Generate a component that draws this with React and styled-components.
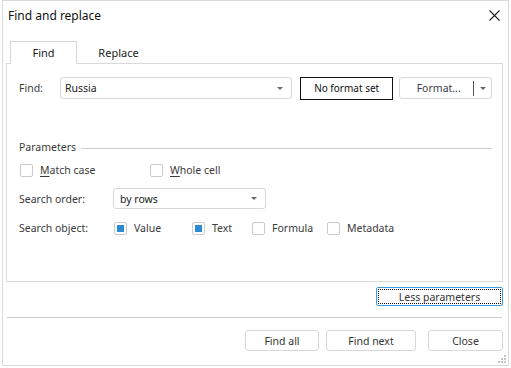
import React from "react";
import styled, { createGlobalStyle } from "styled-components";

const Global = createGlobalStyle`
  html, body { margin: 0; padding: 0; background: #fff; }
  body { font-family: "Noto Sans", "Open Sans", sans-serif; font-size: 10.5px; color: #333; }
`;

const Window = styled.div`
  box-sizing: border-box;
  margin-left: 2px;
  width: 507px;
  height: 366px;
  border: 1px solid #dadada;
  background: #fff;
  display: flex;
  flex-direction: column;
  position: relative;
`;

const TitleBar = styled.div`
  height: 29px;
  display: flex;
  align-items: center;
  justify-content: space-between;
  padding: 0 8px 0 5px;
  font-size: 12px;
  color: #111;
`;

const CloseX = styled.svg`
  width: 11px;
  height: 11px;
  margin-top: -1px;
`;

const TabStrip = styled.div`
  display: flex;
  margin: 11px 0 0 7px;
  height: 22px;
  position: relative;
  z-index: 1;
`;

const Tab = styled.div`
  box-sizing: border-box;
  width: ${(p) => p.$w}px;
  height: ${(p) => (p.$active ? 23 : 22)}px;
  display: flex;
  align-items: center;
  justify-content: center;
  font-size: 11px;
  color: #222;
  background: #fff;
  border: 1px solid ${(p) => (p.$active ? "#d6d6d6" : "transparent")};
  border-bottom: none;
  padding-bottom: 1px;
`;

const Panel = styled.div`
  box-sizing: border-box;
  margin-left: 3px;
  width: 497px;
  height: 219px;
  border: 1px solid #d9d9d9;
  padding: 13px 10px 0 12px;
  display: flex;
  flex-direction: column;
`;

const Row = styled.div`
  display: flex;
  align-items: center;
  height: ${(p) => p.$h || 22}px;
  margin-top: ${(p) => p.$mt || 0}px;
`;

const Label = styled.div`
  width: ${(p) => p.$w}px;
  flex: none;
  color: #3a3a3a;
`;

const Combo = styled.div`
  box-sizing: border-box;
  width: ${(p) => p.$w}px;
  height: ${(p) => p.$h || 22}px;
  border: 1px solid #d8d8d8;
  border-radius: 3px;
  display: flex;
  align-items: center;
  justify-content: space-between;
  padding: 0 8px 0 ${(p) => p.$pl || 4}px;
  color: #222;
`;

const Arrow = styled.span`
  width: 0;
  height: 0;
  border-left: 3px solid transparent;
  border-right: 3px solid transparent;
  border-top: 3px solid #666;
`;

const FormatSet = styled.div`
  box-sizing: border-box;
  margin-left: 8px;
  width: 94px;
  height: 23px;
  border: 1px solid #111;
  display: flex;
  align-items: center;
  justify-content: center;
  font-size: 10px;
  color: #111;
`;

const Split = styled.div`
  box-sizing: border-box;
  margin-left: 6px;
  width: 93px;
  height: 22px;
  border: 1px solid #d8d8d8;
  border-radius: 3px;
  display: flex;
  align-items: center;
  color: #3b3b4b;
`;

const SplitMain = styled.div`
  flex: 1;
  text-align: center;
  padding-left: 4px;
`;

const SplitDivider = styled.div`
  width: 1px;
  height: 15px;
  background: #555;
`;

const SplitArrow = styled.div`
  width: 17px;
  display: flex;
  justify-content: center;
`;

const SectionHead = styled.div`
  display: flex;
  align-items: center;
  margin-top: 41px;
  height: 14px;
  color: #3a3a3a;
  &::after {
    content: "";
    flex: 1;
    height: 1px;
    background: #cdcdcd;
    margin-left: 5px;
    margin-top: 2px;
  }
`;

const Check = styled.label`
  display: flex;
  align-items: center;
  width: ${(p) => (p.$w ? `${p.$w}px` : "auto")};
  color: #3a3a3a;
`;

const Box = styled.span`
  box-sizing: border-box;
  width: 13px;
  height: 13px;
  border: 1px solid #cbcbcb;
  border-radius: 2px;
  margin-left: ${(p) => p.$ml || 0}px;
  margin-right: ${(p) => p.$gap || 7}px;
  display: flex;
  align-items: center;
  justify-content: center;
  &::before {
    content: "";
    display: ${(p) => (p.$checked ? "block" : "none")};
    width: 7px;
    height: 7px;
    background: #2a8ad2;
  }
`;

const U = styled.span`
  text-decoration: underline;
  text-underline-offset: 2px;
`;

const MoreRow = styled.div`
  display: flex;
  justify-content: flex-end;
  padding: 5px 5px 0 0;
  margin-left: 3px;
  width: 497px;
`;

const FocusButton = styled.div`
  box-sizing: border-box;
  width: 127px;
  height: 19px;
  border: 1px solid #3f9be0;
  border-radius: 2px;
  padding: 1px;
  display: flex;
`;

const FocusInner = styled.div`
  flex: 1;
  border: 1px dotted #111;
  display: flex;
  align-items: center;
  justify-content: center;
  color: #333;
`;

const Separator = styled.div`
  margin: 11px 0 0 4px;
  width: 495px;
  height: 1px;
  background: #cdcdcd;
`;

const Footer = styled.div`
  display: flex;
  justify-content: flex-end;
  padding: 12px 5px 0 0;
  width: 505px;
  box-sizing: border-box;
`;

const Button = styled.div`
  box-sizing: border-box;
  width: ${(p) => p.$w}px;
  height: 21px;
  margin-left: ${(p) => p.$ml || 0}px;
  border: 1px solid #d8d8d8;
  border-radius: 3px;
  display: flex;
  align-items: center;
  justify-content: center;
  color: #333;
`;

const Grip = styled.svg`
  position: absolute;
  right: 2px;
  bottom: 2px;
  width: 8px;
  height: 8px;
`;

export default function App() {
  return (
    <>
      <Global />
      <Window>
        <TitleBar>
          <span>Find and replace</span>
          <CloseX viewBox="0 0 11 11">
            <path d="M0.5 0.5 L10.5 10.5 M10.5 0.5 L0.5 10.5" stroke="#222" strokeWidth="1.1" />
          </CloseX>
        </TitleBar>
        <TabStrip>
          <Tab $active $w={67}>Find</Tab>
          <Tab $w={83}>Replace</Tab>
        </TabStrip>
        <Panel>
          <Row>
            <Label $w={41}>Find:</Label>
            <Combo $w={233}>
              <span>Russia</span>
              <Arrow />
            </Combo>
            <FormatSet>No format set</FormatSet>
            <Split>
              <SplitMain>Format...</SplitMain>
              <SplitDivider />
              <SplitArrow>
                <Arrow />
              </SplitArrow>
            </Split>
          </Row>
          <SectionHead>Parameters</SectionHead>
          <Row $mt={9} $h={14}>
            <Check $w={131}>
              <Box $ml={1} />
              <span><U>M</U>atch case</span>
            </Check>
            <Check>
              <Box />
              <span><U>W</U>hole cell</span>
            </Check>
          </Row>
          <Row $mt={11} $h={21}>
            <Label $w={94}>Search order:</Label>
            <Combo $w={153} $h={21} $pl={6}>
              <span>by rows</span>
              <Arrow />
            </Combo>
          </Row>
          <Row $mt={12} $h={14}>
            <Label $w={95}>Search object:</Label>
            <Check $w={78}>
              <Box $checked $gap={7} />
              <span>Value</span>
            </Check>
            <Check $w={60}>
              <Box $checked $gap={7} />
              <span>Text</span>
            </Check>
            <Check $w={75}>
              <Box $gap={7} />
              <span>Formula</span>
            </Check>
            <Check>
              <Box $gap={7} />
              <span>Metadata</span>
            </Check>
          </Row>
        </Panel>
        <MoreRow>
          <FocusButton>
            <FocusInner>Less parameters</FocusInner>
          </FocusButton>
        </MoreRow>
        <Separator />
        <Footer>
          <Button $w={74}>Find all</Button>
          <Button $w={90} $ml={7}>Find next</Button>
          <Button $w={75} $ml={12}>Close</Button>
        </Footer>
        <Grip viewBox="0 0 8 8">
          {[
            [6, 0], [6, 3], [3, 3], [6, 6], [3, 6], [0, 6],
          ].map(([x, y], i) => (
            <rect key={i} x={x} y={y} width="2" height="2" fill="#c4c4c4" />
          ))}
        </Grip>
      </Window>
    </>
  );
}
